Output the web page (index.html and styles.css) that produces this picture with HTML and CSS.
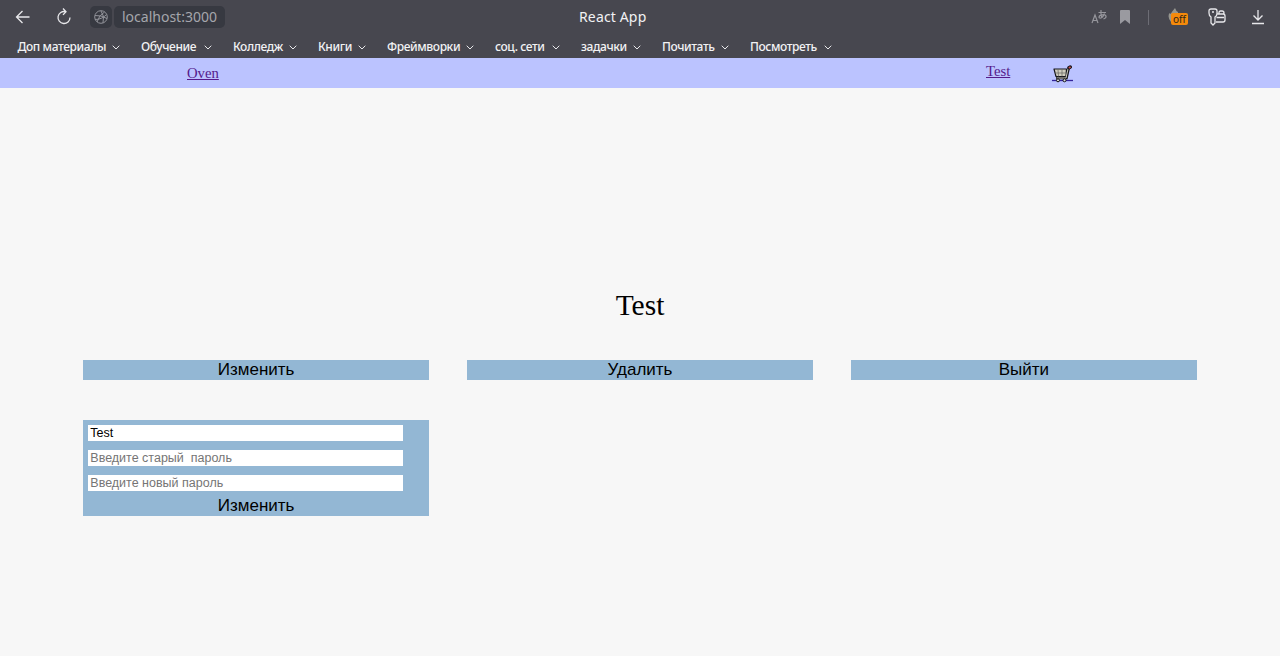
FILE: index.html
```html
<!DOCTYPE html>
<html lang="ru">
<head>
<meta charset="utf-8">
<title>React App</title>
<link rel="stylesheet" href="styles.css">
</head>
<body>
<div class="chrome">
  <div class="toolbar">
    <div class="tools-left">
      <svg class="back" width="16" height="14" viewBox="0 0 16 14"><path d="M7.500 1L1.500 7l6 6M1.500 7H14.500"/></svg>
      <svg class="reload" width="16" height="18" viewBox="0 0 16 18"><path d="M9.500 3.700A6 6 0 1 0 14 9.500M7 .5l3 3.200-3 3.200"/></svg>
      <span class="site"><svg width="16" height="16" viewBox="0 0 16 16"><circle cx="8" cy="8" r="6.300"/><path d="M2 6.500q6-.5 12 3M4 13Q6 6 11.500 3M8 2q4 5 2 12M2 10.500q7 0 11.500-5"/></svg></span>
      <span class="address"><span>localhost:3000</span></span>
    </div>
    <div class="page-title">React App</div>
    <div class="tools-right">
      <svg class="gray" width="17" height="16" viewBox="0 0 17 16"><path d="M1 14l3-8 3 8M2 11.500h4M7.500 3.500h7.500M10 1q-.5 5 1 8M13.500 4.500q-2 5-4.500 4.500-2-.5 0-2.500 5-2 6 .5.500 2-2.500 3"/></svg>
      <svg class="mark" width="10" height="14" viewBox="0 0 10 14"><path d="M1 0h8q1 0 1 1v13l-5-4-5 4V1q0-1 1-1"/></svg>
      <span class="divider"></span>
      <span class="blocker"><svg width="16" height="16" viewBox="0 0 16 16"><path d="M7 0q1 3 3 4v3H4v7H3Q-1 9 1.500 5L2.500 6q2-3 4.500-6"/></svg><b>off</b></span>
      <svg class="keys" width="18" height="18" viewBox="0 0 18 18"><path d="M3 9Q1 8 1 5V3q0-2 2-2h4q2 0 2 2v2.500Q9 8 7 9v6l-2 2-2-2zM4 4h2M11 5.500V4.500Q11 3 12.500 3h1.500Q16 3 16 5v2M9.500 6h5.500Q17 6 17 8v4q0 2-2 2H8M8.500 9.500H16"/></svg>
      <svg class="download" width="12" height="16" viewBox="0 0 12 16"><path d="M6 1v10M1.500 6.500L6 11l4.500-4.500M0 14.500h12"/></svg>
    </div>
  </div>
  <div class="bookmarks">
    <span>Доп материалы</span><svg class="chev" viewBox="0 0 8 5"><path d="M.7.7L4 4 7.300.7"/></svg>
    <span>Обучение</span><svg class="chev" viewBox="0 0 8 5"><path d="M.7.7L4 4 7.300.7"/></svg>
    <span>Колледж</span><svg class="chev" viewBox="0 0 8 5"><path d="M.7.7L4 4 7.300.7"/></svg>
    <span>Книги</span><svg class="chev" viewBox="0 0 8 5"><path d="M.7.7L4 4 7.300.7"/></svg>
    <span>Фреймворки</span><svg class="chev" viewBox="0 0 8 5"><path d="M.7.7L4 4 7.300.7"/></svg>
    <span>соц. сети</span><svg class="chev" viewBox="0 0 8 5"><path d="M.7.7L4 4 7.300.7"/></svg>
    <span>задачки</span><svg class="chev" viewBox="0 0 8 5"><path d="M.7.7L4 4 7.300.7"/></svg>
    <span>Почитать</span><svg class="chev" viewBox="0 0 8 5"><path d="M.7.7L4 4 7.300.7"/></svg>
    <span>Посмотреть</span><svg class="chev" viewBox="0 0 8 5"><path d="M.7.7L4 4 7.300.7"/></svg>
  </div>
</div>
<header class="nav">
  <a class="brand" href="#">Oven</a>
  <a class="user" href="#">Test</a>
  <a class="cart" href="#"><svg width="21" height="18" viewBox="0 0 21 18"><path d="M0 15.500h21" stroke="#34249b" stroke-width="1.300"/><path d="M2 4h12.500L14 11.500H4z" fill="#d0cdbf" stroke="#17171c" stroke-width="1.200" stroke-linejoin="round"/><path d="M6 4.500l.5 7M10 4.500v7M3 8h11" stroke="#66665f" stroke-width=".7"/><path d="M4 13h10.500L16.500 4l1.500-2" fill="none" stroke="#17171c" stroke-width="2.600"/><path d="M4.500 13h9.500L16 4" fill="none" stroke="#d0cdbf" stroke-width="1"/><path d="M17 2.700l1.200-.7" stroke="#17171c" stroke-width="3.500" stroke-linecap="round"/><path d="M17.300 2.700l.8-.4" stroke="#d2504c" stroke-width="1.600" stroke-linecap="round"/><circle cx="6" cy="15.300" r="1.500" fill="#ddd" stroke="#111"/><circle cx="12.500" cy="15.300" r="1.500" fill="#ddd" stroke="#111"/></svg></a>
</header>
<main class="profile">
  <h1>Test</h1>
  <div class="actions">
    <button>Изменить</button>
    <button>Удалить</button>
    <button>Выйти</button>
    <form class="edit">
      <input type="text" value="Test">
      <input type="text" placeholder="Введите старый  пароль">
      <input type="text" placeholder="Введите новый пароль">
      <button type="button">Изменить</button>
    </form>
  </div>
</main>
</body>
</html>
```
FILE: styles.css
```css
* { box-sizing: border-box; }
body { margin: 0; height: 656px; background: #f7f7f7; overflow: hidden; font-family: "Liberation Serif", serif; }
svg { display: block; flex: none; }
.chrome { height: 58px; background: #47474f; color: #f2f2f4; font-family: "Noto Sans", sans-serif; }
.chrome svg { fill: none; stroke: #e8e8eb; stroke-width: 1.3; }
.toolbar { height: 34px; display: grid; grid-template-columns: 579px 1fr auto; align-items: center; }
.tools-left { display: flex; align-items: center; padding-left: 15px; }
.reload { margin-left: 25px; }
.site { width: 22px; height: 22px; margin-left: 18px; padding: 3px; border-radius: 5px; background: #373941; }
.chrome .site svg { stroke: #92939a; stroke-width: 1; }
.address { width: 111px; height: 22px; margin-left: 2px; padding-left: 8px; border-radius: 5px; background: #373941; color: #a5a6ac; font-size: 14px; line-height: 22px; }
.page-title { font-size: 14px; line-height: 18px; letter-spacing: .15px; }
.tools-right { display: flex; align-items: center; padding-right: 16px; }
.chrome .gray { stroke: #96969c; stroke-width: 1.2; }
.chrome .mark { margin-left: 12px; fill: #9a9aa0; stroke: none; }
.divider { width: 1px; height: 15px; margin-left: 18px; background: #6d6d75; }
.blocker { position: relative; width: 20px; height: 18px; margin-left: 19px; }
.chrome .blocker svg { fill: #96968f; stroke: none; }
.blocker b { position: absolute; left: 3px; top: 5px; width: 17px; height: 12px; border-radius: 2px; background: #f58a0b; color: #2d2418; font: 10px/13px "Noto Sans", sans-serif; text-align: center; }
.keys { margin-left: 20px; }
.download { margin-left: 26px; }
.bookmarks { height: 24px; padding: 2px 0 0 17.500px; display: grid; grid-template-columns: 94.500px 29px 63px 29px 56px 29px 40px 29px 79px 29px 57px 29px 52px 29px 59px 29px 74px 8px; align-items: center; font-size: 12px; font-weight: 500; letter-spacing: -.4px; line-height: 22px; white-space: nowrap; }
.bookmarks .chev { width: 8px; height: 5px; stroke-width: 1; }
.nav { height: 30px; background: #bbc3ff; display: flex; font-size: 14.700px; line-height: 17px; }
.nav a { color: #551a8b; }
.brand { margin-left: 187px; padding-top: 7px; width: 799px; }
.user { padding-top: 5px; width: 66px; }
.cart { padding-top: 7px; }
h1 { margin: 0; padding-top: 200px; text-align: center; font-size: 29.500px; line-height: 34px; font-weight: 400; color: #000; }
.actions { margin: 38px 83.300px 0; display: grid; grid-template-columns: repeat(3, 1fr); column-gap: 38.300px; row-gap: 40px; align-items: start; }
button { display: block; width: 100%; height: 20px; margin: 0; padding: 0 0 1px; border: 0; background: #93b7d4; color: #000; font: 17px/19px "Liberation Sans", sans-serif; }
.edit { height: 96px; padding-top: 4.500px; background: #93b7d4; }
.edit input { display: block; width: 315.500px; height: 16.500px; margin: 0 0 8.700px 4.500px; padding: 0 2.500px; border: 0; background: #fff; color: #000; font: 12.500px/16px "Liberation Sans", sans-serif; }
.edit input::placeholder { color: #757575; white-space: pre; }
.edit button { margin-top: -4.500px; }
```
